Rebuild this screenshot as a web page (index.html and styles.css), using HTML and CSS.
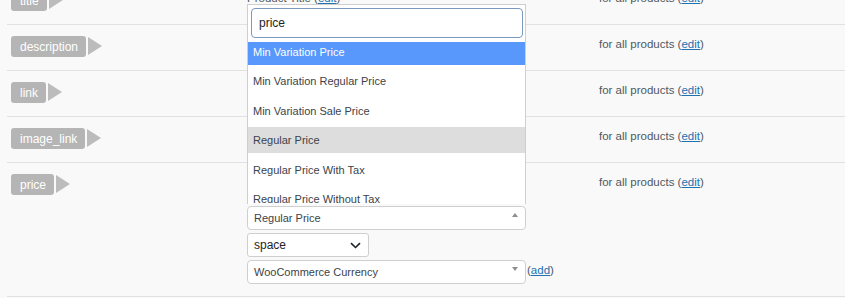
FILE: index.html
```html
<!DOCTYPE html>
<html>
<head>
<meta charset="utf-8">
<link rel="stylesheet" href="styles.css">
</head>
<body>
<div class="fields">
  <div class="row">
    <div class="c-tag"><span class="tag">title</span><span class="tag-arrow"></span></div>
    <div class="c-mid">Product Title (<a href="#">edit</a>)</div>
    <div class="c-right">for all products (<a href="#">edit</a>)</div>
  </div>
  <div class="row">
    <div class="c-tag"><span class="tag">description</span><span class="tag-arrow"></span></div>
    <div class="c-mid"></div>
    <div class="c-right">for all products (<a href="#">edit</a>)</div>
  </div>
  <div class="row">
    <div class="c-tag"><span class="tag">link</span><span class="tag-arrow"></span></div>
    <div class="c-mid"></div>
    <div class="c-right">for all products (<a href="#">edit</a>)</div>
  </div>
  <div class="row">
    <div class="c-tag"><span class="tag">image_link</span><span class="tag-arrow"></span></div>
    <div class="c-mid"></div>
    <div class="c-right">for all products (<a href="#">edit</a>)</div>
  </div>
  <div class="row row-price">
    <div class="c-tag"><span class="tag">price</span><span class="tag-arrow"></span></div>
    <div class="c-mid">
      <div class="price-head"></div>
      <div class="s2 open">
        <div class="s2-drop">
          <div class="s2-search"><div class="s2-input">price</div></div>
          <div class="s2-results">
            <ul>
              <li class="hl">Min Variation Price</li>
              <li>Min Variation Regular Price</li>
              <li>Min Variation Sale Price</li>
              <li class="cur">Regular Price</li>
              <li>Regular Price With Tax</li>
              <li>Regular Price Without Tax</li>
            </ul>
          </div>
        </div>
        <span class="s2-val">Regular Price</span><span class="s2-arrow up"></span>
      </div>
      <div class="native"><span>space</span><svg width="11" height="7" viewBox="0 0 11 7"><path d="M1 1.2l4.5 4.3 4.5-4.3" fill="none" stroke="#1d2327" stroke-width="1.6"/></svg></div>
      <div class="s2-line">
        <div class="s2"><span class="s2-val">WooCommerce Currency</span><span class="s2-arrow down"></span></div>
        <span class="add">(<a href="#">add</a>)</span>
      </div>
    </div>
    <div class="c-right">for all products (<a href="#">edit</a>)</div>
  </div>
</div>
</body>
</html>
```
FILE: styles.css
```css
html, body {
  margin: 0;
  padding: 0;
  background: #f9f9f9;
  overflow: hidden;
}
body {
  font-family: "Liberation Sans", Arial, sans-serif;
  color: #50575e;
}
a {
  color: #2271b1;
  text-decoration: underline;
}
.fields {
  margin: -21px 0 0 7px;
}
.row {
  display: grid;
  grid-template-columns: 240px 352px 1fr;
  height: 45px;
  border-bottom: 1px solid #e1e1e1;
}
.row-price {
  height: 133px;
}
.c-tag {
  display: flex;
  align-items: flex-start;
  padding: 11px 0 0 4px;
}
.tag {
  display: inline-flex;
  align-items: center;
  height: 21px;
  padding: 0 8px 0 9px;
  background: #b5b5b5;
  color: #fff;
  border-radius: 3px;
  font-size: 12px;
}
.tag-arrow {
  width: 0;
  height: 0;
  margin: 1px 0 0 2px;
  border-left: 14px solid #bcbcbc;
  border-top: 9.5px solid transparent;
  border-bottom: 9.5px solid transparent;
}
.c-mid, .c-right {
  padding-top: 10px;
  line-height: 18px;
  font-size: 11.5px;
  white-space: nowrap;
}
.price-head {
  height: 33px;
}
.s2 {
  position: relative;
  box-sizing: border-box;
  width: 279px;
  height: 24px;
  border: 1px solid #cfcfcf;
  border-radius: 4px;
  background: #fff;
  display: flex;
  align-items: center;
  justify-content: space-between;
  padding: 0 6px 0 6px;
  font-size: 11px;
  color: #3c434a;
  margin-bottom: 3px;
}
.s2-arrow {
  width: 0;
  height: 0;
  margin-right: 1px;
  border-left: 3px solid transparent;
  border-right: 3px solid transparent;
}
.s2-arrow.up {
  border-bottom: 4px solid #8c8f94;
  margin-top: -6px;
}
.s2-arrow.down {
  border-top: 4px solid #8c8f94;
  margin-top: -6px;
}
.s2-drop {
  position: absolute;
  left: -1px;
  bottom: calc(100% + 3px);
  box-sizing: border-box;
  width: 279px;
  height: 200px;
  background: #fff;
  border: 1px solid #cfcfcf;
  border-bottom: none;
  z-index: 5;
}
.s2-search {
  padding: 3px 2px 4px 3px;
}
.s2-input {
  box-sizing: border-box;
  height: 30px;
  border: 1px solid #7b98bd;
  border-radius: 4px;
  padding: 0 7px;
  font-size: 12px;
  line-height: 28px;
  color: #1d2327;
}
.s2-results {
  height: 161px;
  overflow: hidden;
}
.s2-results ul {
  list-style: none;
  margin: -3px 0 0 0;
  padding: 0;
}
.s2-results li {
  height: 26px;
  line-height: 26px;
  margin-bottom: 3.4px;
  padding-left: 5px;
  font-size: 11px;
  color: #3c434a;
}
.s2-results li.hl {
  background: #5897fb;
  color: #fff;
}
.s2-results li.cur {
  background: #dddddd;
}
.native {
  box-sizing: border-box;
  width: 122px;
  height: 24px;
  border: 1px solid #cfcfcf;
  border-radius: 3px;
  background: #fff;
  display: flex;
  align-items: center;
  justify-content: space-between;
  padding: 0 7px 0 6px;
  font-size: 12px;
  color: #1d2327;
  margin-bottom: 3px;
}
.s2-line {
  display: flex;
  align-items: center;
}
.s2-line .s2 {
  margin-bottom: 0;
}
.add {
  margin-left: 1px;
  font-size: 11.5px;
  margin-top: -4px;
}
```
